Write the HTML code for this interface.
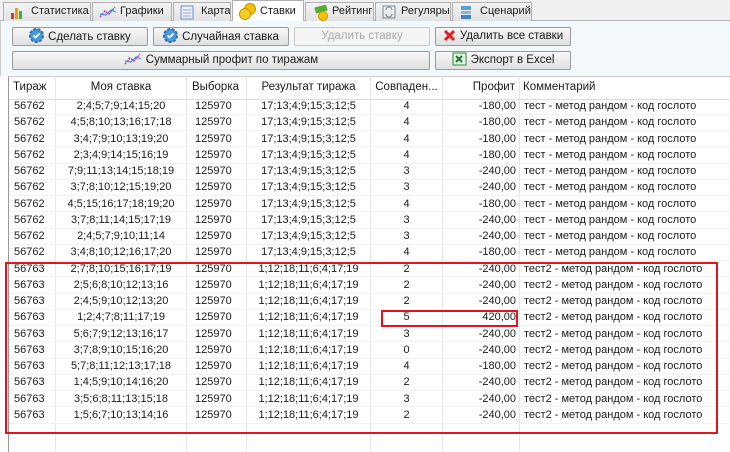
<!DOCTYPE html>
<html><head><meta charset="utf-8">
<style>
*{margin:0;padding:0;box-sizing:border-box}
body{width:730px;height:452px;overflow:hidden;background:#fff;font-family:"Liberation Sans","DejaVu Sans",sans-serif;font-size:11px;color:#1a1a1a;position:relative}
.tabs{position:absolute;left:0;top:0;width:730px;height:21px;background:#f0f0f0;border-bottom:1px solid #b5b5b5}
.tab{position:absolute;top:2px;height:19px;border:1px solid #b0b0b0;border-bottom:none;background:linear-gradient(#f4f4f4,#e2e2e2);font-size:11px;line-height:17px;padding-left:27px;white-space:nowrap}
.tab.act{top:0;height:22px;background:#fff;line-height:20px}
.tab svg{position:absolute;left:6px;top:2px}
.tool{position:absolute;left:0;top:21px;width:730px;height:55px;background:#f3f8fb;border-left:1px solid #ccc}
.btn{position:absolute;height:19px;border:1px solid #9a9a9a;border-radius:2px;background:linear-gradient(#f7f7f7,#e0e0e0);text-align:center;line-height:17px;font-size:11.5px}
.btn svg{vertical-align:-3px;margin-right:4px}
.grid{position:absolute;left:8px;top:76px;width:722px;height:376px;border-left:1px solid #999;border-top:1px solid #ccc;background:#fff}
.vl{position:absolute;top:77px;bottom:0;width:1px;background:#e6e6e6}
.hl{position:absolute;left:9px;width:721px;height:1px;background:#f2f2f2}
.hd{position:absolute;top:81px;font-size:11.5px}
.r{position:absolute;left:0;width:730px;height:16px;line-height:17px;font-size:11px}
.r span{position:absolute;white-space:nowrap}
.a{left:14px}.b{left:57px;width:128px;text-align:center}.d{left:195px}.e{left:247px;width:123px;text-align:center}.f{left:371px;width:71px;text-align:center}.g{left:443px;width:73px;text-align:right}.h{left:524px}
</style></head><body>
<div class="tabs">
<div class="tab" style="left:3px;width:88px"><svg width="16" height="14"><rect x="1" y="8" width="3" height="6" fill="#d33"/><rect x="5" y="3" width="3" height="11" fill="#e8a000"/><rect x="9" y="6" width="3" height="8" fill="#4a4"/></svg>Статистика</div>
<div class="tab" style="left:92px;width:80px"><svg width="18" height="14"><path d="M1 12 L6 6 L10 9 L16 2" stroke="#c3c" stroke-width="1.5" fill="none" stroke-dasharray="2 1"/><path d="M1 9 L7 10 L12 5 L17 7" stroke="#39c" stroke-width="1.2" fill="none"/></svg>Графики</div>
<div class="tab" style="left:173px;width:58px"><svg width="14" height="15"><rect x="1" y="1" width="12" height="13" fill="#eef" stroke="#6b8ec9"/><path d="M3 5h8M3 8h8M3 11h8" stroke="#9ab"/></svg>Карта</div>
<div class="tab act" style="left:232px;width:72px"><svg width="18" height="17"><circle cx="11" cy="6" r="5.5" fill="#f2c200" stroke="#c79200"/><circle cx="6" cy="11" r="5.5" fill="#f5cf20" stroke="#c79200"/></svg>Ставки</div>
<div class="tab" style="left:305px;width:69px;padding-left:26px"><svg width="18" height="16"><rect x="3" y="1" width="12" height="6" fill="#5a3" transform="rotate(-15 9 4)"/><circle cx="11" cy="11" r="4.5" fill="#f2c200" stroke="#c79200"/></svg>Рейтинг</div>
<div class="tab" style="left:375px;width:76px;padding-left:25px"><svg width="14" height="14"><rect x="1" y="1" width="12" height="12" fill="none" stroke="#789" /><path d="M4 5a3 3 0 0 1 6 0M10 9a3 3 0 0 1-6 0" stroke="#789" fill="none"/></svg>Регуляры</div>
<div class="tab" style="left:452px;width:80px"><svg width="14" height="15"><rect x="2" y="1" width="10" height="4" fill="#5ba0d8"/><rect x="2" y="6" width="10" height="3" fill="#7cbbe8"/><rect x="2" y="10" width="10" height="4" fill="#3d86c6"/></svg>Сценарий</div>
</div>
<div class="tool">
<div class="btn" style="left:11px;top:6px;width:136px"><svg width="15" height="15"><circle cx="7.5" cy="7.5" r="6.5" fill="#4a9ad8" stroke="#2a6fae" stroke-dasharray="3 1.5" stroke-width="2"/><path d="M4.5 7.5l2 2 4-4" stroke="#fff" stroke-width="1.6" fill="none"/></svg>Сделать ставку</div>
<div class="btn" style="left:152px;top:6px;width:136px"><svg width="15" height="15"><circle cx="7.5" cy="7.5" r="6.5" fill="#4a9ad8" stroke="#2a6fae" stroke-dasharray="3 1.5" stroke-width="2"/><path d="M4.5 7.5l2 2 4-4" stroke="#fff" stroke-width="1.6" fill="none"/></svg>Случайная ставка</div>
<div class="btn" style="left:293px;top:6px;width:136px;color:#a8a8a8;background:#f4f4f4;border-color:#c8c8c8">Удалить ставку</div>
<div class="btn" style="left:434px;top:6px;width:136px"><svg width="13" height="13"><path d="M2 2l9 9M11 2l-9 9" stroke="#e02020" stroke-width="3"/></svg>Удалить все ставки</div>
<div class="btn" style="left:11px;top:30px;width:418px"><svg width="18" height="14"><path d="M1 12 L6 6 L10 9 L16 2" stroke="#c3c" stroke-width="1.5" fill="none" stroke-dasharray="2 1"/><path d="M1 9 L7 10 L12 5 L17 7" stroke="#39c" stroke-width="1.2" fill="none"/></svg>Суммарный профит по тиражам</div>
<div class="btn" style="left:434px;top:30px;width:136px"><svg width="15" height="14"><rect x="1" y="1" width="13" height="12" fill="#e6f3e6" stroke="#2a8a3a"/><path d="M4 4l6 6M10 4l-6 6" stroke="#1e7a2e" stroke-width="2"/></svg>Экспорт в Excel</div>
</div>
<div class="grid"></div>
<div class="vl" style="left:55px"></div><div class="vl" style="left:186px"></div><div class="vl" style="left:246px"></div><div class="vl" style="left:370px"></div><div class="vl" style="left:442px"></div><div class="vl" style="left:519px"></div>
<div class="hl" style="top:99px;background:#ddd"></div>
<div class="hd" style="left:13px">Тираж</div>
<div class="hd" style="left:57px;width:128px;text-align:center">Моя ставка</div>
<div class="hd" style="left:192px">Выборка</div>
<div class="hd" style="left:247px;width:123px;text-align:center">Результат тиража</div>
<div class="hd" style="left:371px;width:71px;text-align:center">Совпаден...</div>
<div class="hd" style="left:443px;width:72px;text-align:right">Профит</div>
<div class="hd" style="left:523px">Комментарий</div>
<div class="hl" style="top:114px"></div><div class="hl" style="top:130px"></div><div class="hl" style="top:146px"></div><div class="hl" style="top:163px"></div><div class="hl" style="top:179px"></div><div class="hl" style="top:195px"></div><div class="hl" style="top:211px"></div><div class="hl" style="top:228px"></div><div class="hl" style="top:244px"></div><div class="hl" style="top:260px"></div><div class="hl" style="top:276px"></div><div class="hl" style="top:293px"></div><div class="hl" style="top:309px"></div><div class="hl" style="top:325px"></div><div class="hl" style="top:341px"></div><div class="hl" style="top:358px"></div><div class="hl" style="top:374px"></div><div class="hl" style="top:390px"></div><div class="hl" style="top:406px"></div><div class="hl" style="top:423px"></div>
<div class="r" style="top:98px"><span class="a">56762</span><span class="b">2;4;5;7;9;14;15;20</span><span class="d">125970</span><span class="e">17;13;4;9;15;3;12;5</span><span class="f">4</span><span class="g">-180,00</span><span class="h">тест - метод рандом - код гослото</span></div>
<div class="r" style="top:114.25px"><span class="a">56762</span><span class="b">4;5;8;10;13;16;17;18</span><span class="d">125970</span><span class="e">17;13;4;9;15;3;12;5</span><span class="f">4</span><span class="g">-180,00</span><span class="h">тест - метод рандом - код гослото</span></div>
<div class="r" style="top:130.5px"><span class="a">56762</span><span class="b">3;4;7;9;10;13;19;20</span><span class="d">125970</span><span class="e">17;13;4;9;15;3;12;5</span><span class="f">4</span><span class="g">-180,00</span><span class="h">тест - метод рандом - код гослото</span></div>
<div class="r" style="top:146.75px"><span class="a">56762</span><span class="b">2;3;4;9;14;15;16;19</span><span class="d">125970</span><span class="e">17;13;4;9;15;3;12;5</span><span class="f">4</span><span class="g">-180,00</span><span class="h">тест - метод рандом - код гослото</span></div>
<div class="r" style="top:163px"><span class="a">56762</span><span class="b">7;9;11;13;14;15;18;19</span><span class="d">125970</span><span class="e">17;13;4;9;15;3;12;5</span><span class="f">3</span><span class="g">-240,00</span><span class="h">тест - метод рандом - код гослото</span></div>
<div class="r" style="top:179.25px"><span class="a">56762</span><span class="b">3;7;8;10;12;15;19;20</span><span class="d">125970</span><span class="e">17;13;4;9;15;3;12;5</span><span class="f">3</span><span class="g">-240,00</span><span class="h">тест - метод рандом - код гослото</span></div>
<div class="r" style="top:195.5px"><span class="a">56762</span><span class="b">4;5;15;16;17;18;19;20</span><span class="d">125970</span><span class="e">17;13;4;9;15;3;12;5</span><span class="f">4</span><span class="g">-180,00</span><span class="h">тест - метод рандом - код гослото</span></div>
<div class="r" style="top:211.75px"><span class="a">56762</span><span class="b">3;7;8;11;14;15;17;19</span><span class="d">125970</span><span class="e">17;13;4;9;15;3;12;5</span><span class="f">3</span><span class="g">-240,00</span><span class="h">тест - метод рандом - код гослото</span></div>
<div class="r" style="top:228px"><span class="a">56762</span><span class="b">2;4;5;7;9;10;11;14</span><span class="d">125970</span><span class="e">17;13;4;9;15;3;12;5</span><span class="f">3</span><span class="g">-240,00</span><span class="h">тест - метод рандом - код гослото</span></div>
<div class="r" style="top:244.25px"><span class="a">56762</span><span class="b">3;4;8;10;12;16;17;20</span><span class="d">125970</span><span class="e">17;13;4;9;15;3;12;5</span><span class="f">4</span><span class="g">-180,00</span><span class="h">тест - метод рандом - код гослото</span></div>
<div class="r" style="top:260.5px"><span class="a">56763</span><span class="b">2;7;8;10;15;16;17;19</span><span class="d">125970</span><span class="e">1;12;18;11;6;4;17;19</span><span class="f">2</span><span class="g">-240,00</span><span class="h">тест2 - метод рандом - код гослото</span></div>
<div class="r" style="top:276.75px"><span class="a">56763</span><span class="b">2;5;6;8;10;12;13;16</span><span class="d">125970</span><span class="e">1;12;18;11;6;4;17;19</span><span class="f">2</span><span class="g">-240,00</span><span class="h">тест2 - метод рандом - код гослото</span></div>
<div class="r" style="top:293px"><span class="a">56763</span><span class="b">2;4;5;9;10;12;13;20</span><span class="d">125970</span><span class="e">1;12;18;11;6;4;17;19</span><span class="f">2</span><span class="g">-240,00</span><span class="h">тест2 - метод рандом - код гослото</span></div>
<div class="r" style="top:309.25px"><span class="a">56763</span><span class="b">1;2;4;7;8;11;17;19</span><span class="d">125970</span><span class="e">1;12;18;11;6;4;17;19</span><span class="f">5</span><span class="g">420,00</span><span class="h">тест2 - метод рандом - код гослото</span></div>
<div class="r" style="top:325.5px"><span class="a">56763</span><span class="b">5;6;7;9;12;13;16;17</span><span class="d">125970</span><span class="e">1;12;18;11;6;4;17;19</span><span class="f">3</span><span class="g">-240,00</span><span class="h">тест2 - метод рандом - код гослото</span></div>
<div class="r" style="top:341.75px"><span class="a">56763</span><span class="b">3;7;8;9;10;15;16;20</span><span class="d">125970</span><span class="e">1;12;18;11;6;4;17;19</span><span class="f">0</span><span class="g">-240,00</span><span class="h">тест2 - метод рандом - код гослото</span></div>
<div class="r" style="top:358px"><span class="a">56763</span><span class="b">5;7;8;11;12;13;17;18</span><span class="d">125970</span><span class="e">1;12;18;11;6;4;17;19</span><span class="f">4</span><span class="g">-180,00</span><span class="h">тест2 - метод рандом - код гослото</span></div>
<div class="r" style="top:374.25px"><span class="a">56763</span><span class="b">1;4;5;9;10;14;16;20</span><span class="d">125970</span><span class="e">1;12;18;11;6;4;17;19</span><span class="f">2</span><span class="g">-240,00</span><span class="h">тест2 - метод рандом - код гослото</span></div>
<div class="r" style="top:390.5px"><span class="a">56763</span><span class="b">3;5;6;8;11;13;15;18</span><span class="d">125970</span><span class="e">1;12;18;11;6;4;17;19</span><span class="f">3</span><span class="g">-240,00</span><span class="h">тест2 - метод рандом - код гослото</span></div>
<div class="r" style="top:406.75px"><span class="a">56763</span><span class="b">1;5;6;7;10;13;14;16</span><span class="d">125970</span><span class="e">1;12;18;11;6;4;17;19</span><span class="f">2</span><span class="g">-240,00</span><span class="h">тест2 - метод рандом - код гослото</span></div>
<div style="position:absolute;left:5px;top:262px;width:713px;height:172px;border:2.5px solid #e0141e"></div>
<div style="position:absolute;left:381px;top:310px;width:137px;height:17px;border:2.5px solid #e0141e"></div>
</body></html>
